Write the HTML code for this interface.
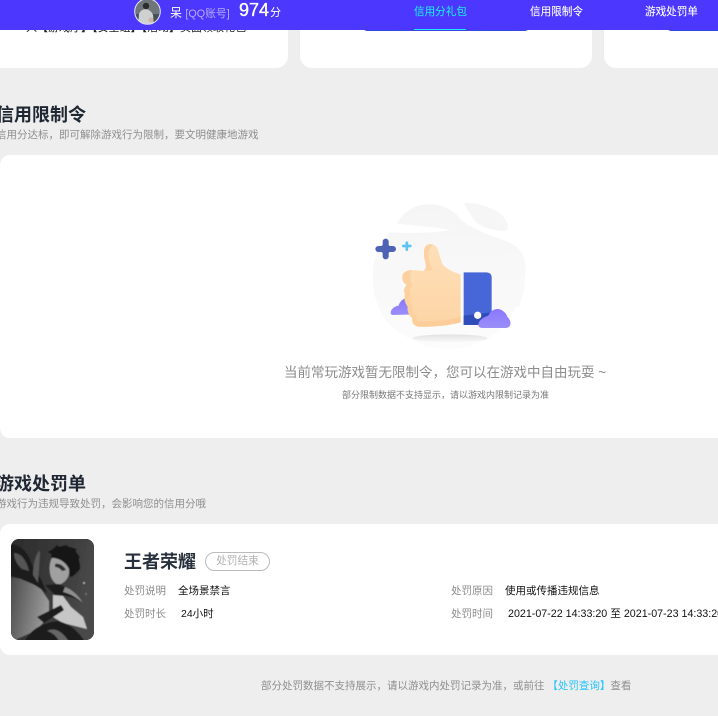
<!DOCTYPE html>
<html lang="zh"><head><meta charset="utf-8"><style>
html,body{margin:0;padding:0;width:718px;height:716px;overflow:hidden;background:#eee}
body{position:relative;font-family:"Liberation Sans","Noto Sans CJK SC",sans-serif}
.a{position:absolute;white-space:nowrap}
.card{position:absolute;background:#fff}
</style></head><body>
<div class="card" style="left:-20px;top:-20px;width:308px;height:88px;border-radius:12px"></div>
<div class="card" style="left:300px;top:-20px;width:292px;height:88px;border-radius:12px"></div>
<div class="card" style="left:604px;top:-20px;width:134px;height:88px;border-radius:12px"></div>
<div class="a" style="left:26px;top:20px;font-size:11px;line-height:16px;color:#222">入【游戏厅】【安全组】【活动】页面领取礼包</div>
<div class="a" style="left:362px;top:20px;width:168px;height:11px;border-radius:6px;background:#3a4ae0"></div>
<div class="a" style="left:666px;top:20px;width:70px;height:11px;border-radius:6px;background:#3a4ae0"></div>

<div class="a" style="left:0;top:0;width:718px;height:30px;background:#4c37ff"></div>
<svg class="a" style="left:134px;top:-2px" width="27" height="27" viewBox="0 0 27 27">
<defs><clipPath id="av"><circle cx="13.5" cy="13.5" r="12.5"/></clipPath></defs>
<g clip-path="url(#av)"><rect width="27" height="27" fill="#6f7679"/><rect y="16" width="27" height="11" fill="#44505a"/>
<path d="M4 27 L5 16 Q7 11 12 11 Q17 12 19 17 L20 27Z" fill="#cfd1d0"/><circle cx="12" cy="8" r="3.2" fill="#2b2b2e"/><circle cx="17" cy="22" r="2.5" fill="#c9b3a6"/></g>
<circle cx="13.5" cy="13.5" r="12.8" fill="none" stroke="#e8e8f4" stroke-width="1"/></svg>
<div class="a" style="left:170px;top:5px;font-size:12px;line-height:17px;color:#fff">呆 <span style="color:#b6acff;font-size:10.8px">[QQ账号]</span></div>
<div class="a" style="left:239px;top:0;font-size:18px;line-height:21px;color:#fff;-webkit-text-stroke:.35px #fff">974</div>
<div class="a" style="left:270px;top:5px;font-size:11px;line-height:16px;color:#fff">分</div>
<div class="a" style="left:414px;top:4px;font-size:10.6px;line-height:16px;color:#1fe6f0;-webkit-text-stroke:.1px #1fe6f0">信用分礼包</div>
<div class="a" style="left:414px;top:29px;width:52px;height:1px;background:#1fe6f0"></div>
<div class="a" style="left:530px;top:4px;font-size:10.6px;line-height:16px;color:#fff;-webkit-text-stroke:.1px #fff">信用限制令</div>
<div class="a" style="left:645px;top:4px;font-size:10.6px;line-height:16px;color:#fff;-webkit-text-stroke:.1px #fff">游戏处罚单</div>

<div class="a" style="left:-4px;top:103px;font-size:18px;line-height:24px;font-weight:bold;color:#1f2733">信用限制令</div>
<div class="a" style="left:-4px;top:127px;font-size:10.5px;line-height:16px;color:#8f8f8f">信用分达标，即可解除游戏行为限制，要文明健康地游戏</div>

<div class="card" style="left:0;top:155px;width:738px;height:283px;border-radius:10px"></div>
<svg class="a" style="left:360px;top:195px" width="175" height="155" viewBox="0 0 525 465">
<defs>
<linearGradient id="bg" x1="0" y1="0" x2="0" y2="1"><stop offset="0" stop-color="#f5f5f6"/><stop offset="1" stop-color="#fcfcfc"/></linearGradient>
<linearGradient id="cl" x1="0" y1="0" x2="0" y2="1"><stop offset="0" stop-color="#8a78ff"/><stop offset="1" stop-color="#9a8ef8"/></linearGradient>
<linearGradient id="sh" x1="0" y1="0" x2="0" y2="1"><stop offset="0" stop-color="#e2e2e4"/><stop offset="1" stop-color="#fafafa"/></linearGradient>
<linearGradient id="hand" x1="0" y1="0" x2="0" y2="1"><stop offset="0" stop-color="#fedfb8"/><stop offset="1" stop-color="#fdd5a6"/></linearGradient>
</defs>
<path d="M110 85 C130 50 165 30 200 28 C245 26 280 45 300 70 C320 95 375 115 430 135 C475 150 497 180 497 215 C497 270 480 330 440 380 C400 435 330 462 270 462 C200 462 130 430 85 385 C50 345 38 295 38 240 C38 195 60 145 110 85Z" fill="url(#bg)"/>
<path d="M310 25 C345 20 395 35 425 60 C445 78 448 100 438 108 C410 108 365 100 345 78 C332 62 322 40 310 25Z" fill="#f6f6f7"/>
<path d="M108 85 C160 92 225 95 270 105 C220 115 140 115 85 112Z" fill="#fff"/>
<path d="M40 290 Q130 255 240 275 T497 268 L478 335 Q300 365 65 335Z" fill="#f9f9fa"/>
<ellipse cx="270" cy="430" rx="112" ry="12" fill="url(#sh)"/>
<path d="M55 162H99M77 140V184" stroke="#4f63b4" stroke-width="18" stroke-linecap="round"/>
<circle cx="77" cy="162" r="15" fill="#4f63b4"/>
<path d="M130 153H151M140.500 143V164" stroke="#5dc4f0" stroke-width="8" stroke-linecap="round"/>
<path d="M92 352 C93 342 105 333 116 332 C120 316 135 306 148 312 L165 358 L100 360 Q91 360 92 352Z" fill="url(#cl)"/>
<path d="M127 245 C128 232 140 226 155 225 L192 228 C197 222 199 215 197 205 C191 188 189 165 197 153 C205 145 222 146 230 156 C238 170 240 195 250 210 C260 222 280 232 302 238 L302 382 C265 392 215 396 175 395 C160 392 155 382 157 370 C148 362 141 350 143 335 C136 325 131 312 135 298 C130 288 132 278 140 270 C131 264 126 256 127 245Z" fill="url(#hand)"/>
<path d="M155 225 C140 226 128 232 127 245 C126 256 131 264 140 270 C132 278 130 288 135 298 C131 312 136 325 143 335 C141 350 148 362 157 370 C155 382 160 392 175 395 L180 395 C170 388 168 378 172 366 C162 358 156 345 159 335 C151 325 148 312 153 300 C147 290 150 278 157 270 C150 262 148 242 155 225Z" fill="#fcd19d"/>
<path d="M197 205 C191 188 189 165 197 153 C203 147 214 146 221 151 C210 152 204 165 206 185 C207 200 210 212 220 226 L192 228 C197 222 199 215 197 205Z" fill="#fcd2a2"/>
<path d="M175 395 C215 396 265 392 302 382 L302 365 C265 378 210 380 165 378 C166 388 170 392 175 395Z" fill="#fccd98"/>
<path d="M311 232 L378 232 Q395 232 395 248 L395 390 L311 390Z" fill="#4767d8"/>
<path d="M311 362 L395 352 L395 390 L311 390Z" fill="#2f4db8"/>
<circle cx="353" cy="361" r="11" fill="#fff"/>
<path d="M355 390 C355 378 368 367 385 362 C392 346 408 338 422 344 C434 350 440 358 442 366 C450 372 454 384 450 392 C447 397 442 399 436 399 L368 399 Q356 399 355 390Z" fill="url(#cl)"/>
</svg>
<div class="a" style="left:284px;top:363px;font-size:13.5px;line-height:20px;color:#8c8c8c">当前常玩游戏暂无限制令，您可以在游戏中自由玩耍 ~</div>
<div class="a" style="left:342px;top:387px;font-size:9px;line-height:16px;color:#777">部分限制数据不支持显示，请以游戏内限制记录为准</div>

<div class="a" style="left:-4px;top:472px;font-size:18px;line-height:24px;font-weight:bold;color:#1f2733">游戏处罚单</div>
<div class="a" style="left:-4px;top:496px;font-size:10.5px;line-height:16px;color:#8f8f8f">游戏行为违规导致处罚，会影响您的信用分哦</div>

<div class="card" style="left:0;top:524px;width:738px;height:131px;border-radius:10px"></div>
<svg class="a" style="left:11px;top:539px" width="83" height="101" viewBox="0 0 83 101">
<defs><clipPath id="h"><rect width="83" height="101" rx="8"/></clipPath>
<linearGradient id="hb" x1="0" y1="0" x2="1" y2=".3"><stop offset="0" stop-color="#2a2a2a"/><stop offset=".6" stop-color="#3b3b3b"/><stop offset="1" stop-color="#4a4a4a"/></linearGradient>
<linearGradient id="wing" x1="0" y1="0" x2="1" y2=".3"><stop offset="0" stop-color="#454545"/><stop offset="1" stop-color="#9a9a9a"/></linearGradient>
<filter id="bl" x="-5%" y="-5%" width="110%" height="110%"><feGaussianBlur stdDeviation=".6"/></filter></defs>
<g clip-path="url(#h)"><rect width="83" height="101" fill="#333"/><g filter="url(#bl)"><rect x="-5" y="-5" width="93" height="111" fill="url(#hb)"/>
<path d="M-3 38 L14 40 L30 50 L38 62 L38 78 L24 92 L-3 104Z" fill="url(#wing)"/>
<path d="M-3 5 C8 5 14 10 19 20 C20 26 25 32 30 40 L36 54 L24 46 L10 40 L-3 36Z" fill="#1c1c1c"/>
<path d="M3 14 C10 14 16 22 18 32 L11 30 C6 26 3 20 3 14Z" fill="#555"/>
<path d="M28 12 C30 8 28 30 27 44 L22 36 C22 26 24 18 28 12Z" fill="#5a5a5a"/>
<path d="M40 18 C42 14 38 14 36 13 C42 11 44 8 46 6 C48 9 50 7 56 6 C56 8 60 8 66 10 C63 12 66 14 69 18 C66 20 70 24 69 30 C66 34 62 38 59 38 C58 28 50 20 40 18Z" fill="#161616"/>
<path d="M41 19 C48 19 55 23 58 30 C59 36 56 42 50 45 C46 47 42 43 40 38 C38 32 38 24 41 19Z" fill="#a0a0a0"/>
<path d="M44 25 C48 24 52 26 55 31 L51 32 C49 29 46 28 44 28Z" fill="#2f2f2f"/>
<path d="M34 46 L48 45 L62 52 C67 56 70 60 72 64 C62 57 52 56 44 56Z" fill="#1a1a1a"/>
<path d="M54 48 C62 51 68 57 72 64 C66 59 60 55 52 53Z" fill="#8f8f8f"/>
<path d="M42 56 L52 57 L60 68 L72 78 L76 90 L52 84 L42 78Z" fill="#c6c6c6"/>
<path d="M26 78 L50 66 L53 71 L33 84Z" fill="#1c1c1c"/>
<path d="M12 106 C18 90 32 84 46 82 C58 84 68 92 76 106Z" fill="#1e1e1e"/>
<path d="M36 92 C44 88 52 92 60 106 L50 106 C46 97 42 94 36 92Z" fill="#666"/>
<circle cx="73" cy="44" r="1" fill="#bbb"/><circle cx="75" cy="55" r=".7" fill="#999"/></g></g></svg>

<div class="a" style="left:124px;top:549px;font-size:18px;line-height:26px;font-weight:bold;color:#27303d">王者荣耀</div>
<div class="a" style="left:205px;top:552px;width:63px;height:17px;border:1px solid #bbb;border-radius:10px;font-size:10.7px;line-height:17px;text-align:center;color:#b0b0b0">处罚结束</div>
<div class="a" style="left:124px;top:583px;font-size:10.5px;line-height:16px;color:#8b8b8b">处罚说明</div>
<div class="a" style="left:178px;top:583px;font-size:10.5px;line-height:16px;color:#111">全场景禁言</div>
<div class="a" style="left:124px;top:606px;font-size:10.5px;line-height:16px;color:#8b8b8b">处罚时长</div>
<div class="a" style="left:181px;top:606px;font-size:10.5px;line-height:16px;color:#111">24小时</div>
<div class="a" style="left:451px;top:583px;font-size:10.5px;line-height:16px;color:#8b8b8b">处罚原因</div>
<div class="a" style="left:505px;top:583px;font-size:10.5px;line-height:16px;color:#111">使用或传播违规信息</div>
<div class="a" style="left:451px;top:606px;font-size:10.5px;line-height:16px;color:#8b8b8b">处罚时间</div>
<div class="a" style="left:508px;top:606px;font-size:10.7px;line-height:16px;color:#111">2021-07-22 14:33:20 至 2021-07-23 14:33:20</div>

<div class="a" style="left:261px;top:678px;font-size:10.5px;line-height:16px;color:#8f8f8f">部分处罚数据不支持展示，请以游戏内处罚记录为准，或前往 <span style="color:#27c4ff">【处罚查询】</span>查看</div>
</body></html>
